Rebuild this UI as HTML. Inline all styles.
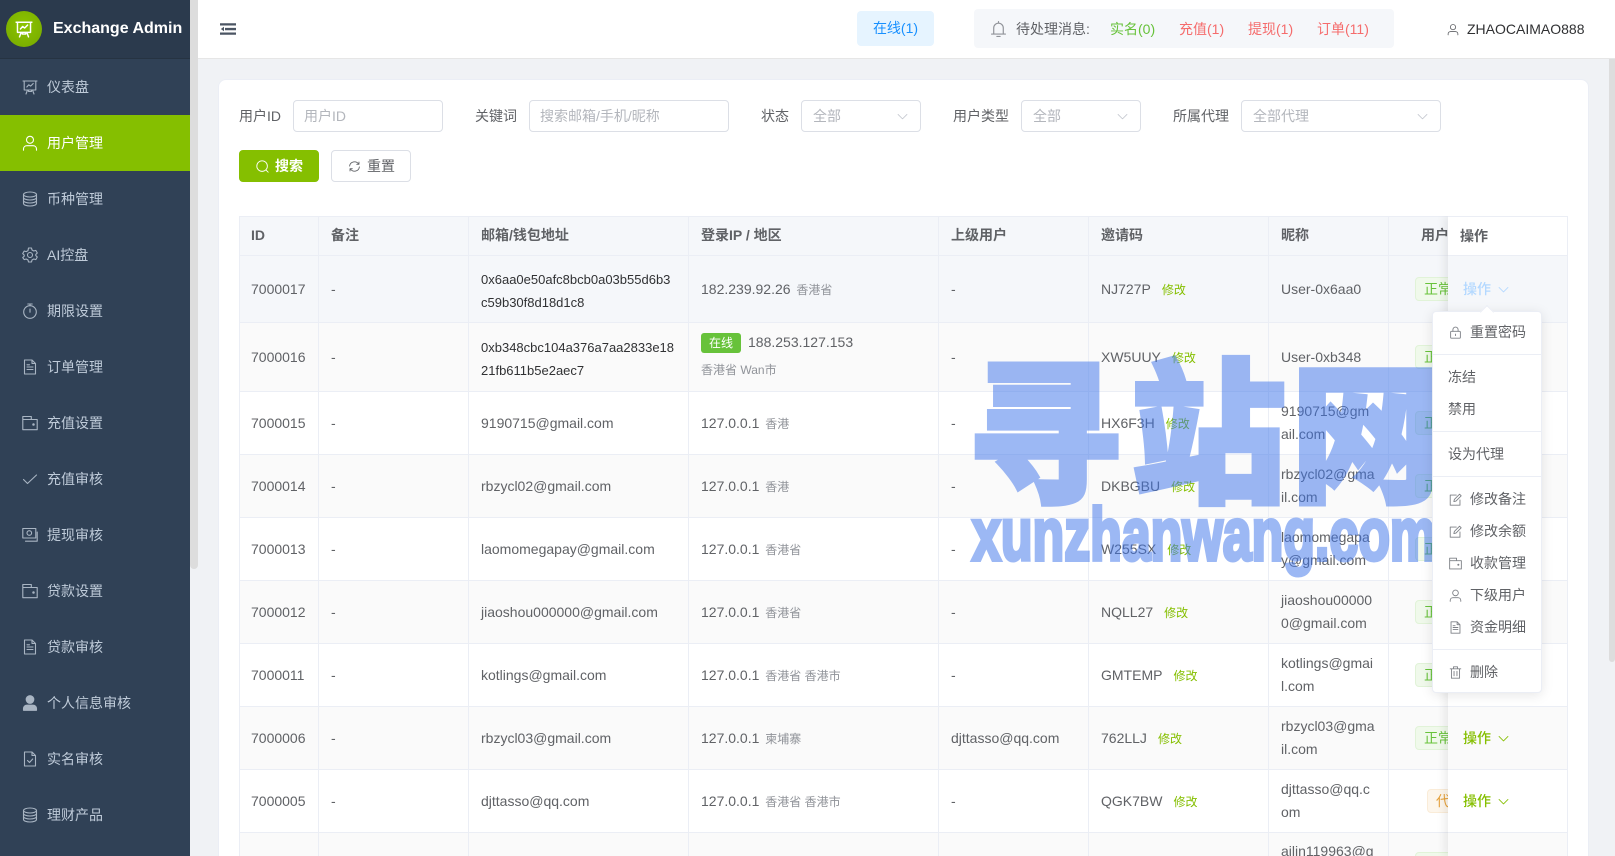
<!DOCTYPE html>
<html lang="zh"><head><meta charset="utf-8"><title>Exchange Admin</title>
<style>
*{box-sizing:border-box}
html,body{margin:0;padding:0;width:1615px;height:856px;overflow:hidden;background:#f0f2f5;font-family:"Liberation Sans","Noto Sans CJK SC",sans-serif;font-size:14px;color:#606266}
#page{position:relative;width:1615px;height:856px;overflow:hidden;background:#f0f2f5}
svg.i{width:16px;height:16px;fill:none;stroke:currentColor;stroke-width:1.1;stroke-linecap:round;stroke-linejoin:round;display:block}
.a{position:absolute;white-space:nowrap}
#side{position:absolute;left:0;top:0;width:190px;height:856px;background:#304156;overflow:hidden}
#logo{height:59px;background:#2b3a4d;border-bottom:1px solid #263342;position:relative}
#logo .c{position:absolute;left:6px;top:11px;width:36px;height:36px;border-radius:50%;background:radial-gradient(circle at 50% 40%,#8cc400,#75a800);color:#fff;padding:9px}
#logo b{position:absolute;left:53px;top:19px;font-size:16px;color:#fff;line-height:20px;white-space:nowrap}
.m{position:absolute;left:0;width:190px;height:56px;color:#bfcbd9;line-height:56px}
.m svg{position:absolute;left:22px;top:20px;color:#a9b5c3}
.m span{position:absolute;left:47px;top:0}
.m.on{background:#85bf00;color:#fff}.m.on svg{color:#fff}
#thumb{position:absolute;left:190px;top:0;width:8px;height:569px;background:#ddd;border-radius:0 0 4px 4px}
#head{position:absolute;left:198px;top:0;width:1417px;height:59px;background:#fff;border-bottom:1px solid #e6e6e6}
#pscroll{position:absolute;left:1609px;top:59px;width:6px;height:603px;background:#ddd;border-radius:0 0 3px 3px}
#card{position:absolute;left:218px;top:79px;width:1371px;height:800px;background:#fff;border:1px solid #ebeef5;border-radius:8px}
.lb{position:absolute;top:106px;line-height:20px;color:#606266;white-space:nowrap}
.in{position:absolute;top:100px;height:32px;background:#fff;border:1px solid #dcdfe6;border-radius:4px;color:#b3b6bc;line-height:30px;padding-left:11px;white-space:nowrap}
.in svg{position:absolute;right:12px;top:10px;width:11px;height:11px;color:#c0c4cc}
.btn{position:absolute;top:150px;height:32px;width:80px;border-radius:4px;line-height:30px}
.btn svg{position:absolute;left:16px;top:9px;width:13px;height:13px}
.btn span{position:absolute;left:35px;font-weight:400}
.g{font-size:12px;color:#909399;margin-left:2px}
.fx{color:#85bf00;font-size:12px;margin-left:11px}
.n{position:absolute;white-space:nowrap;line-height:23.4px}
.hx{font-size:13px;color:#303133}
.tag{position:absolute;margin-top:-12px;height:24px;width:70px;border-radius:4px;background:#f0f9eb;border:1px solid #e1f3d8;color:#67c23a;font-size:14px;line-height:22px;padding-left:8px;white-space:nowrap}
.tag.o{background:#fdf6ec;border-color:#faecd8;color:#e6a23c}
.rw{position:absolute;left:0;width:1329px;border-bottom:1px solid #ebeef5}
.vl{position:absolute;top:0;width:1px;height:640px;background:#ebeef5}
#fix{position:absolute;left:1448px;top:216px;width:120px;height:640px;overflow:hidden;box-shadow:-4px 0 8px rgba(0,0,0,.07);background:#fff;border-top:1px solid #ebeef5;border-right:1px solid #ebeef5;clip-path:inset(0 0 0 -12px)}
#fix .f{position:absolute;left:0;width:119px;border-bottom:1px solid #ebeef5;background:#fff}
#fix .f.s{background:#fafafa}#fix .f.h{background:#f5f7fa}
#fix .op{position:absolute;left:15px;top:50%;margin-top:-11px;line-height:22px;color:#85bf00;font-weight:500}
#fix .op svg{position:absolute;left:35px;top:6px;width:11px;height:11px;stroke-width:1.2}
#dd{position:absolute;left:1432px;top:311px;width:110px;height:382px;background:#fff;border:1px solid #ebeef5;border-radius:4px;box-shadow:0 2px 12px rgba(0,0,0,.1);color:#606266}
#dd:before{content:"";position:absolute;left:49px;top:-5px;width:9px;height:9px;background:#fff;transform:rotate(45deg);border-left:1px solid #ebeef5;border-top:1px solid #ebeef5}
#dd .it{position:absolute;white-space:nowrap;line-height:20px}
#dd .ln{position:absolute;left:0;width:108px;height:1px;background:#ebeef5}
#dd svg{position:absolute;left:16px;width:13px;height:13px;color:#7d8086}
#wm{position:absolute;left:0;top:0;pointer-events:none}
</style></head><body><div id="page">
<svg width="0" height="0" style="position:absolute"><defs>
<symbol id="board" viewBox="0 0 16 16"><path d="M1 2h14M2.2 2v9h11.6V2M5.5 11l-1.5 4M10.500 11l1.500 4M6.500 11v1.500h3V11M4.800 8l2-2.200 1.800 1.300 2.600-2.600"/></symbol>
<symbol id="user" viewBox="0 0 16 16"><circle cx="8" cy="4.800" r="3.500"/><path d="M1.500 15.200v-1.200c0-2 1.500-3.300 3.500-3.300h6c2 0 3.500 1.300 3.500 3.300v1.200"/></symbol>
<symbol id="coin" viewBox="0 0 16 16"><ellipse cx="8" cy="3.500" rx="6.500" ry="2.500"/><path d="M1.500 3.500v9c0 1.400 2.900 2.500 6.500 2.500s6.500-1.100 6.500-2.500v-9M1.500 6.500c0 1.400 2.900 2.500 6.500 2.500s6.500-1.100 6.500-2.500M1.500 9.500c0 1.400 2.900 2.500 6.500 2.500s6.500-1.100 6.500-2.500"/></symbol>
<symbol id="gear" viewBox="0 0 16 16"><circle cx="8" cy="8" r="2.500"/><path d="M6.500 1h3l.5 2 1.800 1 2-.6 1.500 2.600-1.500 1.400v1.200l1.500 1.400-1.500 2.600-2-.6-1.800 1-.5 2h-3l-.5-2-1.800-1-2 .6L.7 10.600l1.500-1.400V8L.7 6.600 2.200 4l2 .6L6 3.600z"/></symbol>
<symbol id="time" viewBox="0 0 16 16"><circle cx="8" cy="9" r="6.300"/><path d="M5.800 1h4.400M8 1v1.700M8 6v3.200"/></symbol>
<symbol id="doc" viewBox="0 0 16 16"><path d="M2.500 1h7.500l3.500 3.500V15h-11zM10 1v3.500h3.500M5 8h6M5 10.500h6M5 5.800h2.500"/></symbol>
<symbol id="wal" viewBox="0 0 16 16"><path d="M.8 1.500h8.500v3h5.900v10.200H.8zM.8 4.500h8.500"/><circle cx="11.500" cy="9.500" r=".7" fill="currentColor"/></symbol>
<symbol id="chk" viewBox="0 0 16 16"><path d="M1.500 8.500l4 4 9-8.500"/></symbol>
<symbol id="money" viewBox="0 0 16 16"><rect x=".8" y="1.500" width="13" height="9.500"/><circle cx="7.300" cy="6" r="2.300"/><path d="M15.200 5v9.200H3.500"/></symbol>
<symbol id="solid" viewBox="0 0 16 16"><circle cx="8" cy="4.500" r="3.800" fill="currentColor"/><path d="M1.500 15.300v-1.800c0-2 1.500-3.300 3.500-3.300h6c2 0 3.500 1.300 3.500 3.300v1.800z" fill="currentColor"/></symbol>
<symbol id="dchk" viewBox="0 0 16 16"><path d="M2.500 1h7.500l3.500 3.500V15h-11zM10 1v3.500h3.500M5.500 9.500l2 2 3.200-3.500"/></symbol>
<symbol id="lock" viewBox="0 0 16 16"><rect x="2" y="6.500" width="12" height="8.500" rx="1"/><path d="M4.800 6.500V4.500a3.200 3.200 0 0 1 6.400 0v2M8 10v1.800"/></symbol>
<symbol id="edit" viewBox="0 0 16 16"><path d="M13.500 8.500V15H1.500V2.500H9M6 10.500l.6-2.600L13 1.500l2 2-6.400 6.400z"/></symbol>
<symbol id="del" viewBox="0 0 16 16"><path d="M1.500 3.500h13M5.500 3.500V1h5v2.500M3 3.500V15h10V3.500M6.200 6.500v5.500M9.800 6.500v5.500"/></symbol>
<symbol id="dn" viewBox="0 0 16 16"><path d="M1.500 5l6.500 6.500L14.500 5"/></symbol>
<symbol id="bell" viewBox="0 0 16 16"><path d="M8 1v1.500M3.500 12.500V7a4.500 4.500 0 0 1 9 0v5.500M1.500 12.800h13M6.500 15h3"/></symbol>
<symbol id="srch" viewBox="0 0 16 16"><circle cx="7.500" cy="7.500" r="6.500"/><path d="M12.500 12.500l2.500 2.500"/></symbol>
<symbol id="ref" viewBox="0 0 16 16"><path d="M2 7.500A6 6 0 0 1 13 5M14 8.500A6 6 0 0 1 3 11M13.500 2.500V5.300h-2.800M2.500 13.500v-2.800h2.800"/></symbol>
</defs></svg>

<div id="side">
<div id="logo"><div class="c"><svg class="i" style="width:18px;height:18px;stroke-width:1.300"><use href="#board"/></svg></div><b>Exchange Admin</b></div>
<div class="m" style="top:59px"><svg class="i"><use href="#board"/></svg><span>仪表盘</span></div>
<div class="m on" style="top:115px"><svg class="i"><use href="#user"/></svg><span>用户管理</span></div>
<div class="m" style="top:171px"><svg class="i"><use href="#coin"/></svg><span>币种管理</span></div>
<div class="m" style="top:227px"><svg class="i"><use href="#gear"/></svg><span>AI控盘</span></div>
<div class="m" style="top:283px"><svg class="i"><use href="#time"/></svg><span>期限设置</span></div>
<div class="m" style="top:339px"><svg class="i"><use href="#doc"/></svg><span>订单管理</span></div>
<div class="m" style="top:395px"><svg class="i"><use href="#wal"/></svg><span>充值设置</span></div>
<div class="m" style="top:451px"><svg class="i"><use href="#chk"/></svg><span>充值审核</span></div>
<div class="m" style="top:507px"><svg class="i"><use href="#money"/></svg><span>提现审核</span></div>
<div class="m" style="top:563px"><svg class="i"><use href="#wal"/></svg><span>贷款设置</span></div>
<div class="m" style="top:619px"><svg class="i"><use href="#doc"/></svg><span>贷款审核</span></div>
<div class="m" style="top:675px"><svg class="i"><use href="#solid"/></svg><span>个人信息审核</span></div>
<div class="m" style="top:731px"><svg class="i"><use href="#dchk"/></svg><span>实名审核</span></div>
<div class="m" style="top:787px"><svg class="i"><use href="#coin"/></svg><span>理财产品</span></div>
</div>
<div id="thumb"></div>

<div id="head"></div>
<svg class="a" style="left:220px;top:22px;width:16px;height:14px;color:#4b5563" viewBox="0 0 16 14"><path d="M0 1.200h16v2.300H0zM5 5.900h11v2.300H5zM0 10.500h16v2.300H0zM4 4.800v4.400L0.800 7z" fill="currentColor"/></svg>
<div class="a" style="left:857px;top:11px;width:77px;height:35px;background:#e6f4ff;border-radius:4px;color:#1890ff;line-height:35px;text-align:center">在线(1)</div>
<div class="a" style="left:974px;top:9px;width:420px;height:39px;background:#f5f7fa;border-radius:4px"></div>
<svg class="i a" style="left:990px;top:20px;width:17px;height:18px;color:#909399"><use href="#bell"/></svg>
<div class="a" style="left:1016px;top:19px;line-height:20px;color:#606266">待处理消息:</div>
<div class="a" style="left:1110px;top:19px;line-height:20px;color:#67c23a">实名(0)</div>
<div class="a" style="left:1179px;top:19px;line-height:20px;color:#f56c6c">充值(1)</div>
<div class="a" style="left:1248px;top:19px;line-height:20px;color:#f56c6c">提现(1)</div>
<div class="a" style="left:1317px;top:19px;line-height:20px;color:#f56c6c">订单(11)</div>
<svg class="i a" style="left:1447px;top:23px;width:12px;height:13px;color:#606266"><use href="#user"/></svg>
<div class="a" style="left:1467px;top:19px;line-height:20px;color:#303133">ZHAOCAIMAO888</div>
<div id="pscroll"></div>

<div id="card"></div>
<div class="lb" style="left:239px">用户ID</div><div class="in" style="left:293px;width:150px;padding-left:10px">用户ID</div>
<div class="lb" style="left:475px">关键词</div><div class="in" style="left:529px;width:200px;padding-left:10px">搜索邮箱/手机/昵称</div>
<div class="lb" style="left:761px">状态</div><div class="in" style="left:801px;width:120px">全部<svg class="i"><use href="#dn"/></svg></div>
<div class="lb" style="left:953px">用户类型</div><div class="in" style="left:1021px;width:120px">全部<svg class="i"><use href="#dn"/></svg></div>
<div class="lb" style="left:1173px">所属代理</div><div class="in" style="left:1241px;width:200px">全部代理<svg class="i"><use href="#dn"/></svg></div>
<div class="btn" style="left:239px;background:#85bf00;border:1px solid #85bf00;color:#fff"><svg class="i"><use href="#srch"/></svg><span style="font-weight:700">搜索</span></div>
<div class="btn" style="left:331px;background:#fff;border:1px solid #dcdfe6;color:#606266"><svg class="i"><use href="#ref"/></svg><span>重置</span></div>

<div style="position:absolute;left:239px;top:216px;width:1329px;height:640px;overflow:hidden;border:1px solid #ebeef5;border-bottom:0">
<div class="rw" style="top:0;height:39px;background:#f5f7fa"></div>
<div class="rw" style="top:39px;height:67px;background:#f5f7fa"></div>
<div class="rw" style="top:106px;height:69px;background:#fafafa"></div>
<div class="rw" style="top:175px;height:63px;background:#fff"></div>
<div class="rw" style="top:238px;height:63px;background:#fafafa"></div>
<div class="rw" style="top:301px;height:63px;background:#fff"></div>
<div class="rw" style="top:364px;height:63px;background:#fafafa"></div>
<div class="rw" style="top:427px;height:63px;background:#fff"></div>
<div class="rw" style="top:490px;height:63px;background:#fafafa"></div>
<div class="rw" style="top:553px;height:63px;background:#fff"></div>
<div class="rw" style="top:616px;height:30px;background:#fafafa;border-bottom:0"></div>
<div class="vl" style="left:78px"></div>
<div class="vl" style="left:228px"></div>
<div class="vl" style="left:448px"></div>
<div class="vl" style="left:698px"></div>
<div class="vl" style="left:848px"></div>
<div class="vl" style="left:1028px"></div>
<div class="vl" style="left:1148px"></div>
</div>

<div class="n" style="left:251px;top:224px;font-weight:700">ID</div><div class="n" style="left:331px;top:224px;font-weight:700">备注</div><div class="n" style="left:481px;top:224px;font-weight:700">邮箱/钱包地址</div><div class="n" style="left:701px;top:224px;font-weight:700">登录IP / 地区</div><div class="n" style="left:951px;top:224px;font-weight:700">上级用户</div><div class="n" style="left:1101px;top:224px;font-weight:700">邀请码</div><div class="n" style="left:1281px;top:224px;font-weight:700">昵称</div><div class="n" style="left:1421px;top:224px;font-weight:700">用户状态</div>

<div class="n" style="left:251px;top:278px">7000017</div><div class="n" style="left:331px;top:278px">-</div><div class="n hx" style="left:481px;top:268px">0x6aa0e50afc8bcb0a03b55d6b3<br>c59b30f8d18d1c8</div><div class="n" style="left:701px;top:278px">182.239.92.26 <span class="g">香港省</span></div><div class="n" style="left:951px;top:278px">-</div><div class="n" style="left:1101px;top:278px">NJ727P<span class="fx">修改</span></div><div class="n" style="left:1281px;top:278px">User-0x6aa0</div>

<div class="n" style="left:251px;top:346px">7000016</div><div class="n" style="left:331px;top:346px">-</div><div class="n hx" style="left:481px;top:336px">0xb348cbc104a376a7aa2833e18<br>21fb611b5e2aec7</div><div class="a" style="left:701px;top:333px;width:40px;height:20px;background:#67c23a;color:#fff;border-radius:3px;font-size:12px;line-height:20px;text-align:center">在线</div><div class="n" style="left:748px;top:331px">188.253.127.153</div><div class="n" style="left:701px;top:359px;font-size:12px;color:#909399">香港省 Wan市</div><div class="n" style="left:951px;top:346px">-</div><div class="n" style="left:1101px;top:346px">XW5UUY<span class="fx">修改</span></div><div class="n" style="left:1281px;top:346px">User-0xb348</div>

<div class="n" style="left:251px;top:412px">7000015</div><div class="n" style="left:331px;top:412px">-</div><div class="n" style="left:481px;top:412px">9190715@gmail.com</div><div class="n" style="left:701px;top:412px">127.0.0.1 <span class="g">香港</span></div><div class="n" style="left:951px;top:412px">-</div><div class="n" style="left:1101px;top:412px">HX6F3H<span class="fx">修改</span></div><div class="n" style="left:1281px;top:400px">9190715@gm<br>ail.com</div>

<div class="n" style="left:251px;top:475px">7000014</div><div class="n" style="left:331px;top:475px">-</div><div class="n" style="left:481px;top:475px">rbzycl02@gmail.com</div><div class="n" style="left:701px;top:475px">127.0.0.1 <span class="g">香港</span></div><div class="n" style="left:951px;top:475px">-</div><div class="n" style="left:1101px;top:475px">DKBGBU<span class="fx">修改</span></div><div class="n" style="left:1281px;top:463px">rbzycl02@gma<br>il.com</div>

<div class="n" style="left:251px;top:538px">7000013</div><div class="n" style="left:331px;top:538px">-</div><div class="n" style="left:481px;top:538px">laomomegapay@gmail.com</div><div class="n" style="left:701px;top:538px">127.0.0.1 <span class="g">香港省</span></div><div class="n" style="left:951px;top:538px">-</div><div class="n" style="left:1101px;top:538px">W255SX<span class="fx">修改</span></div><div class="n" style="left:1281px;top:526px">laomomegapa<br>y@gmail.com</div>

<div class="n" style="left:251px;top:601px">7000012</div><div class="n" style="left:331px;top:601px">-</div><div class="n" style="left:481px;top:601px">jiaoshou000000@gmail.com</div><div class="n" style="left:701px;top:601px">127.0.0.1 <span class="g">香港省</span></div><div class="n" style="left:951px;top:601px">-</div><div class="n" style="left:1101px;top:601px">NQLL27<span class="fx">修改</span></div><div class="n" style="left:1281px;top:589px">jiaoshou00000<br>0@gmail.com</div>

<div class="n" style="left:251px;top:664px">7000011</div><div class="n" style="left:331px;top:664px">-</div><div class="n" style="left:481px;top:664px">kotlings@gmail.com</div><div class="n" style="left:701px;top:664px">127.0.0.1 <span class="g">香港省 香港市</span></div><div class="n" style="left:951px;top:664px">-</div><div class="n" style="left:1101px;top:664px">GMTEMP<span class="fx">修改</span></div><div class="n" style="left:1281px;top:652px">kotlings@gmai<br>l.com</div>

<div class="n" style="left:251px;top:727px">7000006</div><div class="n" style="left:331px;top:727px">-</div><div class="n" style="left:481px;top:727px">rbzycl03@gmail.com</div><div class="n" style="left:701px;top:727px">127.0.0.1 <span class="g">柬埔寨</span></div><div class="n" style="left:951px;top:727px">djttasso@qq.com</div><div class="n" style="left:1101px;top:727px">762LLJ<span class="fx">修改</span></div><div class="n" style="left:1281px;top:715px">rbzycl03@gma<br>il.com</div>

<div class="n" style="left:251px;top:790px">7000005</div><div class="n" style="left:331px;top:790px">-</div><div class="n" style="left:481px;top:790px">djttasso@qq.com</div><div class="n" style="left:701px;top:790px">127.0.0.1 <span class="g">香港省 香港市</span></div><div class="n" style="left:951px;top:790px">-</div><div class="n" style="left:1101px;top:790px">QGK7BW<span class="fx">修改</span></div><div class="n" style="left:1281px;top:778px">djttasso@qq.c<br>om</div>

<div class="n" style="left:1281px;top:840px">ailin119963@g</div>

<div class="tag" style="left:1415px;top:289px">正常</div><div class="tag" style="left:1415px;top:357px">正常</div><div class="tag" style="left:1415px;top:423px">正常</div><div class="tag" style="left:1415px;top:486px">正常</div><div class="tag" style="left:1415px;top:549px">正常</div><div class="tag" style="left:1415px;top:612px">正常</div><div class="tag" style="left:1415px;top:675px">正常</div><div class="tag" style="left:1415px;top:738px">正常</div><div class="tag o" style="left:1427px;top:801px">代理</div><div class="tag" style="left:1415px;top:864px">正常</div>

<div id="fix">
<div class="f" style="top:0;height:39px"><span class="a" style="left:12px;top:8px;line-height:23px;font-weight:700;color:#606266">操作</span></div>
<div class="f h" style="top:39px;height:67px"><span class="op" style="color:#b3d8ff">操作<svg class="i"><use href="#dn"/></svg></span></div>
<div class="f s" style="top:106px;height:69px"></div>
<div class="f" style="top:175px;height:63px"></div>
<div class="f s" style="top:238px;height:63px"></div>
<div class="f" style="top:301px;height:63px"></div>
<div class="f s" style="top:364px;height:63px"></div>
<div class="f" style="top:427px;height:63px"></div>
<div class="f s" style="top:490px;height:63px"><span class="op">操作<svg class="i"><use href="#dn"/></svg></span></div>
<div class="f" style="top:553px;height:63px"><span class="op">操作<svg class="i"><use href="#dn"/></svg></span></div>
<div class="f s" style="top:616px;height:40px"></div>
</div>

<svg id="wm" width="1615" height="856" viewBox="0 0 1615 856"><g opacity=".5" fill="#3c73eb" stroke="#3c73eb" font-family="Noto Sans CJK SC,sans-serif" font-weight="900"><text x="967" y="490" font-size="155" stroke-width="5">寻</text><text x="1131" y="490" font-size="155" stroke-width="5">站</text><text x="1291" y="490" font-size="150" stroke-width="5">网</text></g><g opacity=".5" fill="#3c73eb" stroke="#3c73eb"><text x="972" y="560" font-family="Liberation Sans,sans-serif" font-weight="700" font-size="74" stroke-width="4" textLength="464" lengthAdjust="spacingAndGlyphs">xunzhanwang.com</text></g></svg>

<div id="dd">
<svg class="i" style="top:14px"><use href="#lock"/></svg><div class="it" style="left:37px;top:10px">重置密码</div>
<div class="ln" style="top:42px"></div>
<div class="it" style="left:15px;top:55px">冻结</div>
<div class="it" style="left:15px;top:87px">禁用</div>
<div class="ln" style="top:119px"></div>
<div class="it" style="left:15px;top:132px">设为代理</div>
<div class="ln" style="top:164px"></div>
<svg class="i" style="top:181px"><use href="#edit"/></svg><div class="it" style="left:37px;top:177px">修改备注</div>
<svg class="i" style="top:213px"><use href="#edit"/></svg><div class="it" style="left:37px;top:209px">修改余额</div>
<svg class="i" style="top:245px"><use href="#wal"/></svg><div class="it" style="left:37px;top:241px">收款管理</div>
<svg class="i" style="top:277px"><use href="#user"/></svg><div class="it" style="left:37px;top:273px">下级用户</div>
<svg class="i" style="top:309px"><use href="#doc"/></svg><div class="it" style="left:37px;top:305px">资金明细</div>
<div class="ln" style="top:337px"></div>
<svg class="i" style="top:354px"><use href="#del"/></svg><div class="it" style="left:37px;top:350px">删除</div>
</div>
</div></body></html>
